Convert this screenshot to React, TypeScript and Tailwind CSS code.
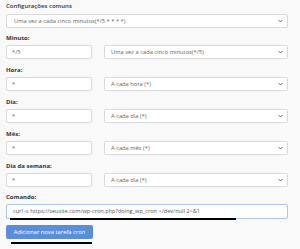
import React from "react";

const Chevron = () => (
  <svg width="5" height="4" viewBox="0 0 5 4" className="shrink-0">
    <path d="M0.6 1 L2.5 3 L4.4 1" fill="none" stroke="#666" strokeWidth="0.9" />
  </svg>
);

const Label = ({ children, semi }: { children: React.ReactNode; semi?: boolean }) => (
  <div className={`h-[8px] leading-[8px] text-[6px] ${semi ? "font-semibold" : "font-bold"} text-[#333]`}>{children}</div>
);

const Select = ({ text, className }: { text: string; className?: string }) => (
  <div className={`h-[14px] bg-white border border-[#d9d9d9] rounded-[2px] flex items-center justify-between pl-[6px] pr-[4px] text-[5.75px] text-[#666] ${className ?? ""}`}>
    <span className="whitespace-nowrap">{text}</span>
    <Chevron />
  </div>
);

const Input = ({ text }: { text: string }) => (
  <div className="h-[14px] w-[86px] bg-white border border-[#d9d9d9] rounded-[2px] flex items-center pl-[5px] text-[5.75px] text-[#666]">
    {text}
  </div>
);

const Row = ({ label, value, option, mt }: { label: string; value: string; option: string; mt: string }) => (
  <div className={mt}>
    <Label>{label}</Label>
    <div className="mt-[3px] flex gap-[12px]">
      <Input text={value} />
      <Select text={option} className="w-[184px]" />
    </div>
  </div>
);

export default function App() {
  return (
    <div className="w-[300px] h-[249px] bg-[#f9f9f9] px-[6px] pt-[2px] overflow-hidden" style={{ fontFamily: '"Open Sans", sans-serif' }}>
      <Label semi>Configurações comuns</Label>
      <Select text="Uma vez a cada cinco minutos(*/5 * * * *)" className="mt-[4px] w-[282px] pl-[7px]" />
      <Row mt="mt-[6px]" label="Minuto:" value="*/5" option="Uma vez a cada cinco minutos(*/5)" />
      <Row mt="mt-[7px]" label="Hora:" value="*" option="A cada hora (*)" />
      <Row mt="mt-[7px]" label="Dia:" value="*" option="A cada dia (*)" />
      <Row mt="mt-[7px]" label="Mês:" value="*" option="A cada mês (*)" />
      <Row mt="mt-[7px]" label="Dia da semana:" value="*" option="A cada dia (*)" />
      <div className="mt-[6px]">
        <Label>Comando:</Label>
        <div className="mt-[3px] h-[15px] w-[282px] bg-white border border-[#a9c6ee] rounded-[2px] flex items-center pl-[6px] text-[5.6px] text-[#555] whitespace-nowrap">
          curl -s https://seusite.com/wp-cron.php?doing_wp_cron &gt;/dev/null 2&gt;&amp;1
        </div>
        <div className="-mt-[1px] ml-[4px] w-[226px] h-[2px] bg-black" />
      </div>
      <div className="mt-[5px] h-[14px] w-[87px] bg-[#5b8ed8] rounded-[2px] flex items-center justify-center text-[5.8px] text-white">
        Adicionar nova tarefa cron
      </div>
      <div className="mt-[3px] ml-[5px] w-[81px] h-[2px] bg-black" />
    </div>
  );
}
